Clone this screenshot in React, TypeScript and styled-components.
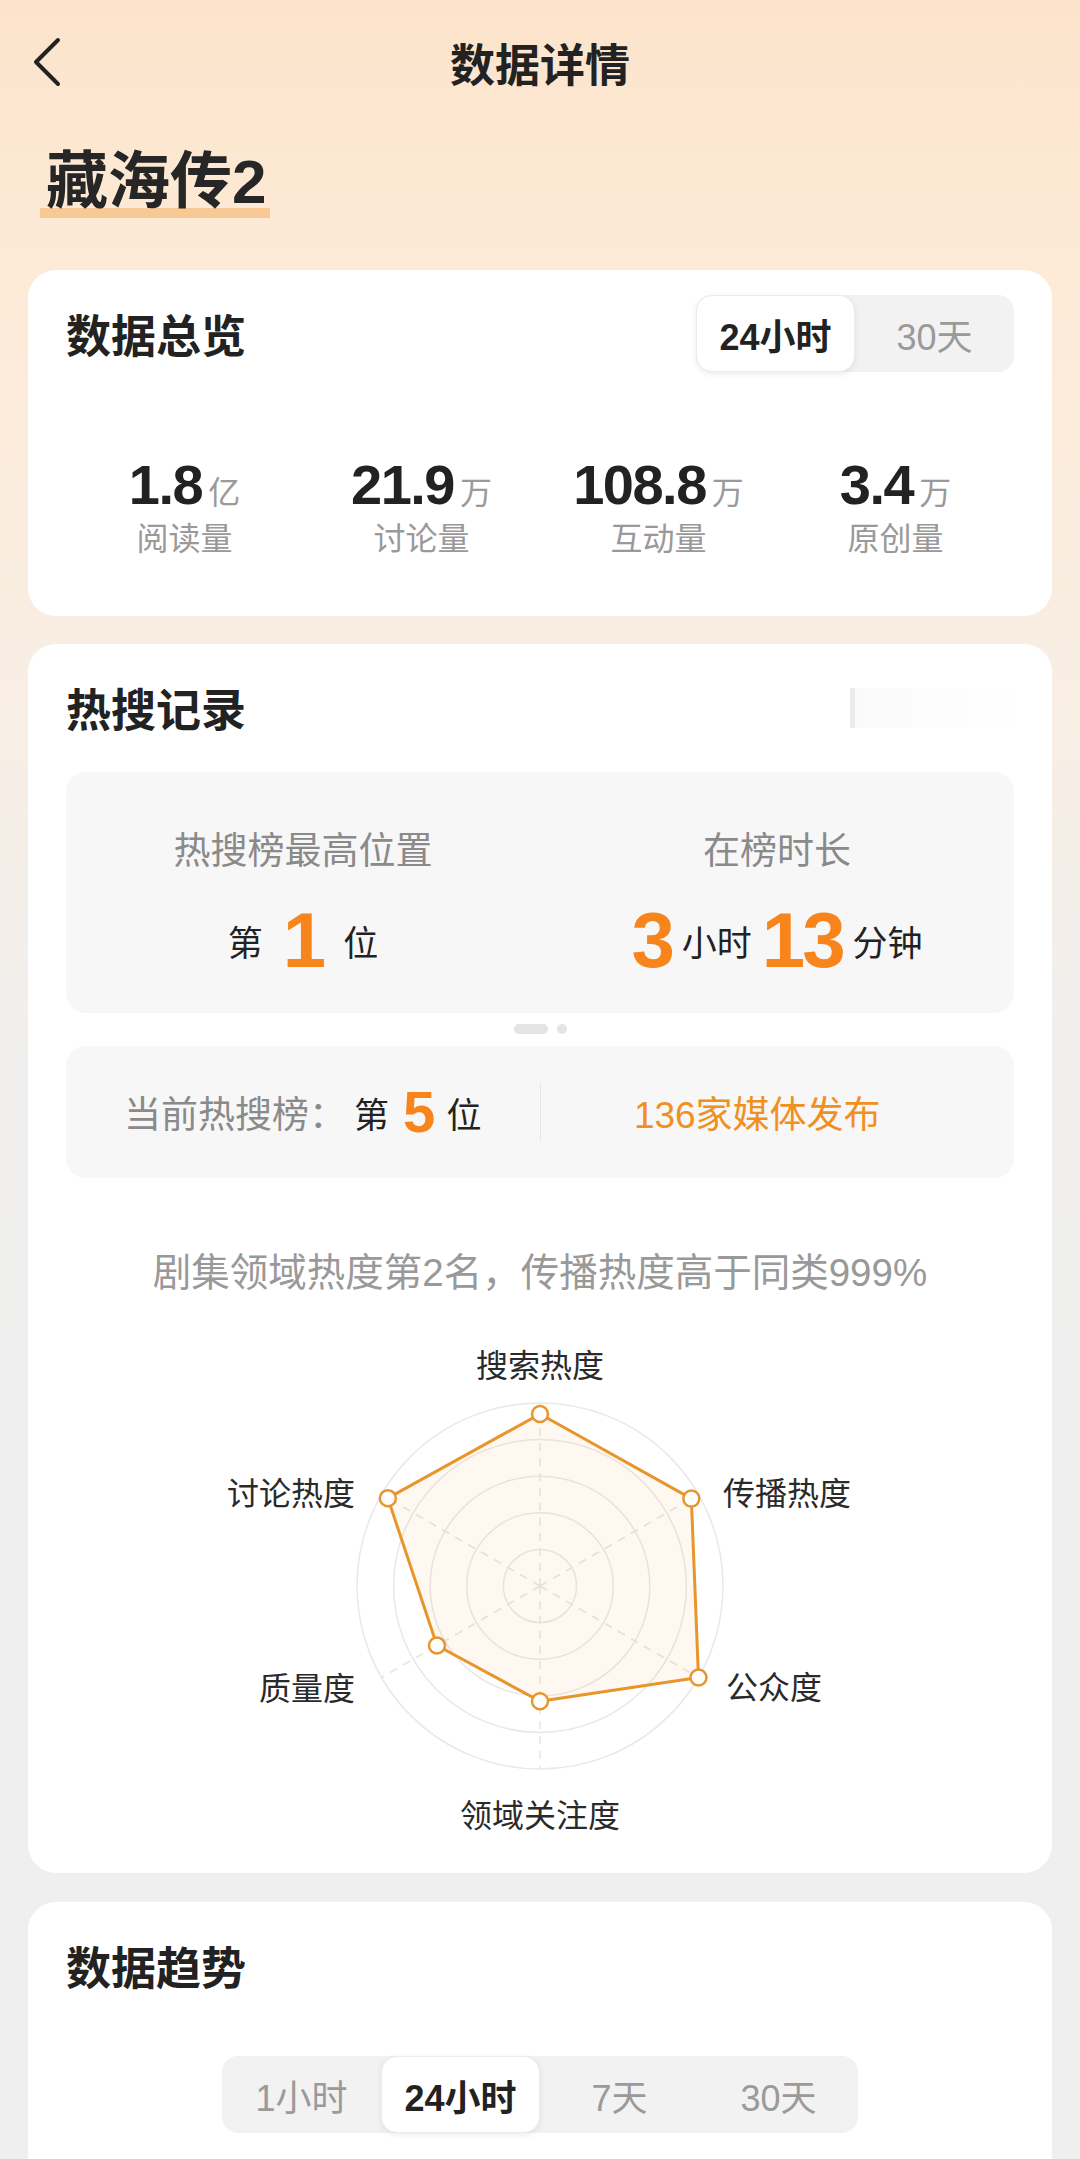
import React from 'react'
import styled, { createGlobalStyle } from 'styled-components'

const GlobalStyle = createGlobalStyle`
  body {
    margin: 0;
    background: #efefef;
    font-family: "Liberation Sans", "Noto Sans CJK SC", sans-serif;
    color: #222;
  }
`

const Page = styled.div`
  width: 1080px;
  min-height: 2300px;
  background: linear-gradient(180deg, #fce4cb 0px, #fdebd9 320px, #f8eee4 700px, #f1efed 1050px, #efefef 1350px);
  padding-bottom: 40px;
`

const NavBar = styled.div`
  height: 124px;
  display: grid;
  grid-template-columns: 1fr auto 1fr;
  align-items: center;
  padding: 0 30px;
  box-sizing: border-box;
`

const BackButton = styled.div`
  display: flex;
  align-items: center;
`

const NavTitle = styled.div`
  font-size: 45px;
  font-weight: 700;
  color: #222;
`

const ShowTitle = styled.div`
  display: inline-block;
  margin: 22px 0 0 40px;
  padding: 0 4px 0 6px;
  font-size: 62px;
  line-height: 72px;
  font-weight: 700;
  color: #262626;
  background: linear-gradient(#f8c895, #f8c895) left bottom / 100% 10px no-repeat;
`

const Card = styled.div<{ $top: number; $bottom: number }>`
  margin: ${({ $top }) => $top}px 28px 0;
  background: #fff;
  border-radius: 28px;
  padding: 25px 38px ${({ $bottom }) => $bottom}px;
`

const CardHeader = styled.div`
  height: 77px;
  display: flex;
  align-items: center;
  justify-content: space-between;
`

const CardTitle = styled.div`
  font-size: 45px;
  font-weight: 600;
  color: #222;
`

const Segmented = styled.div<{ $cols: number; $center?: boolean }>`
  display: grid;
  grid-template-columns: repeat(${({ $cols }) => $cols}, 159px);
  height: 77px;
  background: #f2f2f2;
  border-radius: 16px;
  ${({ $center }) => ($center ? 'margin: 52px auto 0; width: max-content;' : '')}
`

const SegItem = styled.div<{ $active?: boolean }>`
  display: flex;
  align-items: center;
  justify-content: center;
  font-size: 36px;
  border-radius: 16px;
  color: ${({ $active }) => ($active ? '#222' : '#9a9a9a')};
  font-weight: ${({ $active }) => ($active ? 700 : 400)};
  background: ${({ $active }) => ($active ? '#fff' : 'transparent')};
  box-shadow: ${({ $active }) => ($active ? '0 2px 6px rgba(0,0,0,0.08)' : 'none')};
  border: ${({ $active }) => ($active ? '1px solid #ececec' : 'none')};
`

const StatsRow = styled.div`
  display: grid;
  grid-template-columns: repeat(4, 1fr);
  margin-top: 81px;
`

const Stat = styled.div`
  display: flex;
  flex-direction: column;
  align-items: center;
`

const StatValue = styled.div`
  display: flex;
  align-items: baseline;
  height: 64px;
  line-height: 64px;
`

const StatNumber = styled.span`
  font-size: 56px;
  font-weight: 700;
  color: #222;
  letter-spacing: -1.5px;
`

const StatUnit = styled.span`
  font-size: 32px;
  color: #9a9a9a;
  margin-left: 6px;
`

const StatLabel = styled.div`
  font-size: 32px;
  line-height: 44px;
  color: #999;
`

const FadedTab = styled.div`
  width: 170px;
  height: 40px;
  margin-right: -6px;
  background: linear-gradient(90deg, #ececec 0 5px, #fafafa 5px, #fdfdfd 60%, #fff);
`

const GrayBox = styled.div<{ $top: number }>`
  margin-top: ${({ $top }) => $top}px;
  background: #f7f7f7;
  border-radius: 20px;
`

const RecordGrid = styled.div`
  display: grid;
  grid-template-columns: 1fr 1fr;
  padding: 56px 0 33px;
`

const RecordCol = styled.div`
  display: flex;
  flex-direction: column;
  align-items: center;
`

const RecordLabel = styled.div`
  font-size: 37px;
  line-height: 48px;
  color: #8a8a8a;
`

const RecordValue = styled.div<{ $gap: number }>`
  margin-top: 24px;
  height: 80px;
  display: flex;
  align-items: center;
  gap: ${({ $gap }) => $gap}px;
`

const SmallText = styled.span`
  font-size: 35px;
  color: #222;
`

const BigDigit = styled.span<{ $size: number }>`
  font-family: "Liberation Sans Narrow", "Liberation Sans", sans-serif;
  font-size: ${({ $size }) => $size}px;
  font-weight: 700;
  color: #f7851c;
  line-height: 1;
  letter-spacing: -3px;
`

const Dots = styled.div`
  display: flex;
  justify-content: center;
  gap: 9px;
  margin-top: 11px;
  height: 10px;
`

const Dot = styled.div<{ $wide?: boolean }>`
  width: ${({ $wide }) => ($wide ? 34 : 10)}px;
  height: 10px;
  border-radius: 5px;
  background: #e4e4e4;
`

const RankRow = styled.div`
  height: 132px;
  display: grid;
  grid-template-columns: 1fr 1px 1fr;
  align-items: center;
`

const RankLeft = styled.div`
  display: flex;
  align-items: center;
  justify-content: center;
  gap: 14px;
`

const RankLabel = styled.span`
  font-size: 37px;
  color: #8a8a8a;
  margin-right: -6px;
`

const Divider = styled.div`
  height: 58px;
  background: #e6e6e6;
`

const MediaText = styled.div`
  text-align: center;
  padding-right: 40px;
  font-size: 37px;
  color: #f0901f;
`

const Summary = styled.div`
  margin-top: 69px;
  text-align: center;
  font-size: 38.5px;
  line-height: 52px;
  color: #999;
`

const RadarSvg = styled.svg`
  display: block;
  margin-top: 20px;
`

const axes = ['搜索热度', '传播热度', '公众度', '领域关注度', '质量度', '讨论热度']
const values = [0.94, 0.955, 1.0, 0.63, 0.65, 0.96]
const labelPos: { x: number; y: number; anchor: 'start' | 'middle' | 'end' }[] = [
  { x: 474, y: 58, anchor: 'middle' },
  { x: 657, y: 186, anchor: 'start' },
  { x: 660, y: 380, anchor: 'start' },
  { x: 474, y: 508, anchor: 'middle' },
  { x: 289, y: 381, anchor: 'end' },
  { x: 289, y: 186, anchor: 'end' },
]

function Radar() {
  const cx = 474
  const cy = 267
  const R = 183
  const pt = (i: number, r: number) => {
    const a = ((-90 + i * 60) * Math.PI) / 180
    return [cx + r * Math.cos(a), cy + r * Math.sin(a)]
  }
  const poly = values.map((v, i) => pt(i, v * R).join(',')).join(' ')
  return (
    <RadarSvg width={948} height={530} viewBox="0 0 948 530">
      {[1, 2, 3, 4, 5].map((k) => (
        <circle key={k} cx={cx} cy={cy} r={(R * k) / 5} fill="none" stroke="#e8e8e8" strokeWidth={1.5} />
      ))}
      {axes.map((_, i) => {
        const [x, y] = pt(i, R)
        return <line key={i} x1={cx} y1={cy} x2={x} y2={y} stroke="#e6e6e6" strokeWidth={1.5} strokeDasharray="8 7" />
      })}
      <polygon points={poly} fill="rgba(246,150,50,0.07)" stroke="#e8952c" strokeWidth={3} strokeLinejoin="round" />
      {values.map((v, i) => {
        const [x, y] = pt(i, v * R)
        return <circle key={i} cx={x} cy={y} r={8} fill="#fff" stroke="#e8952c" strokeWidth={2.5} />
      })}
      {axes.map((a, i) => (
        <text
          key={a}
          x={labelPos[i].x}
          y={labelPos[i].y}
          textAnchor={labelPos[i].anchor}
          fontSize={32}
          fill="#2a2a2a"
          fontFamily='"Noto Sans CJK SC", sans-serif'
        >
          {a}
        </text>
      ))}
    </RadarSvg>
  )
}

const stats = [
  { num: '1.8', unit: '亿', label: '阅读量' },
  { num: '21.9', unit: '万', label: '讨论量' },
  { num: '108.8', unit: '万', label: '互动量' },
  { num: '3.4', unit: '万', label: '原创量' },
]

export default function App() {
  return (
    <Page>
      <GlobalStyle />
      <NavBar>
        <BackButton>
          <svg width="36" height="52" viewBox="0 0 36 52">
            <polyline points="28,4 6,26 28,48" fill="none" stroke="#222" strokeWidth="4" strokeLinecap="round" strokeLinejoin="round" />
          </svg>
        </BackButton>
        <NavTitle>数据详情</NavTitle>
        <div />
      </NavBar>

      <ShowTitle>藏海传2</ShowTitle>

      <Card $top={52} $bottom={55}>
        <CardHeader>
          <CardTitle>数据总览</CardTitle>
          <Segmented $cols={2}>
            <SegItem $active>24小时</SegItem>
            <SegItem>30天</SegItem>
          </Segmented>
        </CardHeader>
        <StatsRow>
          {stats.map((s) => (
            <Stat key={s.label}>
              <StatValue>
                <StatNumber>{s.num}</StatNumber>
                <StatUnit>{s.unit}</StatUnit>
              </StatValue>
              <StatLabel>{s.label}</StatLabel>
            </Stat>
          ))}
        </StatsRow>
      </Card>

      <Card $top={28} $bottom={24}>
        <CardHeader>
          <CardTitle>热搜记录</CardTitle>
          <FadedTab />
        </CardHeader>
        <GrayBox $top={26}>
          <RecordGrid>
            <RecordCol>
              <RecordLabel>热搜榜最高位置</RecordLabel>
              <RecordValue $gap={20}>
                <SmallText>第</SmallText>
                <BigDigit $size={78}>1</BigDigit>
                <SmallText>位</SmallText>
              </RecordValue>
            </RecordCol>
            <RecordCol>
              <RecordLabel>在榜时长</RecordLabel>
              <RecordValue $gap={10}>
                <BigDigit $size={78}>3</BigDigit>
                <SmallText>小时</SmallText>
                <BigDigit $size={78}>13</BigDigit>
                <SmallText>分钟</SmallText>
              </RecordValue>
            </RecordCol>
          </RecordGrid>
        </GrayBox>
        <Dots>
          <Dot $wide />
          <Dot />
        </Dots>
        <GrayBox $top={12}>
          <RankRow>
            <RankLeft>
              <RankLabel>当前热搜榜：</RankLabel>
              <SmallText>第</SmallText>
              <BigDigit $size={58}>5</BigDigit>
              <SmallText>位</SmallText>
            </RankLeft>
            <Divider />
            <MediaText>136家媒体发布</MediaText>
          </RankRow>
        </GrayBox>
        <Summary>剧集领域热度第2名，传播热度高于同类999%</Summary>
        <Radar />
      </Card>

      <Card $top={29} $bottom={60}>
        <CardHeader>
          <CardTitle>数据趋势</CardTitle>
        </CardHeader>
        <Segmented $cols={4} $center>
          <SegItem>1小时</SegItem>
          <SegItem $active>24小时</SegItem>
          <SegItem>7天</SegItem>
          <SegItem>30天</SegItem>
        </Segmented>
      </Card>
    </Page>
  )
}
